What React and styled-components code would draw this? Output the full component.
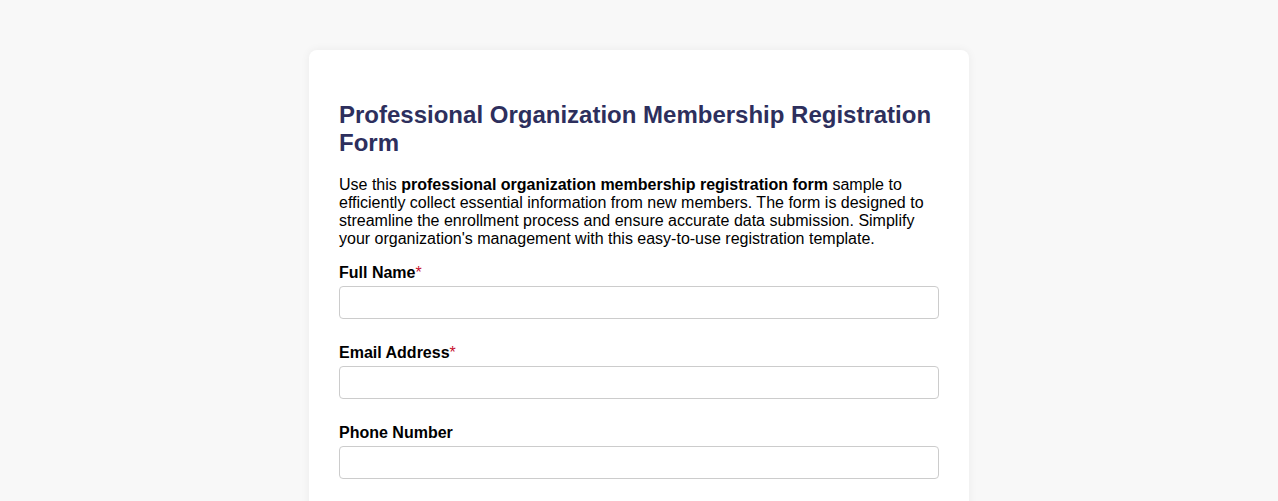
import React from "react";
import styled, { createGlobalStyle } from "styled-components";

const Global = createGlobalStyle`
  html, body { margin: 0; padding: 0; background: #f8f8f8; }
  body { font-family: "Liberation Sans", Arial, sans-serif; color: #000; }
`;

const Page = styled.div`
  display: flex;
  justify-content: center;
  padding-top: 50px;
  min-height: 501px;
  box-sizing: border-box;
`;

const Card = styled.form`
  width: 660px;
  box-sizing: border-box;
  background: #fff;
  border-radius: 8px;
  box-shadow: 0 0 10px rgba(0, 0, 0, 0.06);
  padding: 51px 30px 30px;
`;

const Title = styled.h1`
  margin: 0 0 19px;
  font-size: 24px;
  line-height: 28px;
  font-weight: bold;
  color: #2d2f5d;
`;

const Intro = styled.p`
  margin: 0 0 15px;
  font-size: 16px;
  line-height: 18px;
`;

const Field = styled.div`
  display: flex;
  flex-direction: column;
  gap: 4px;
  margin-bottom: 24px;
`;

const Label = styled.label`
  padding-top: 1px;
  font-size: 16px;
  line-height: 18px;
  font-weight: bold;
`;

const Req = styled.span`
  color: #c8102e;
  font-weight: normal;
`;

const Input = styled.input`
  width: 100%;
  height: 33px;
  box-sizing: border-box;
  border: 1px solid #cccccc;
  border-radius: 4px;
  padding: 8px;
  font-size: 16px;
  font-family: inherit;
  background: #fff;
  outline: none;
`;

const fields = [
  { label: "Full Name", required: true, type: "text" },
  { label: "Email Address", required: true, type: "email" },
  { label: "Phone Number", required: false, type: "tel" },
];

export default function App() {
  return (
    <>
      <Global />
      <Page>
        <Card>
          <Title>Professional Organization Membership Registration Form</Title>
          <Intro>
            Use this <b>professional organization membership registration form</b> sample to
            efficiently collect essential information from new members. The form is designed to
            streamline the enrollment process and ensure accurate data submission. Simplify your
            organization's management with this easy-to-use registration template.
          </Intro>
          {fields.map((f) => (
            <Field key={f.label}>
              <Label>
                {f.label}
                {f.required && <Req>*</Req>}
              </Label>
              <Input type={f.type} />
            </Field>
          ))}
        </Card>
      </Page>
    </>
  );
}
